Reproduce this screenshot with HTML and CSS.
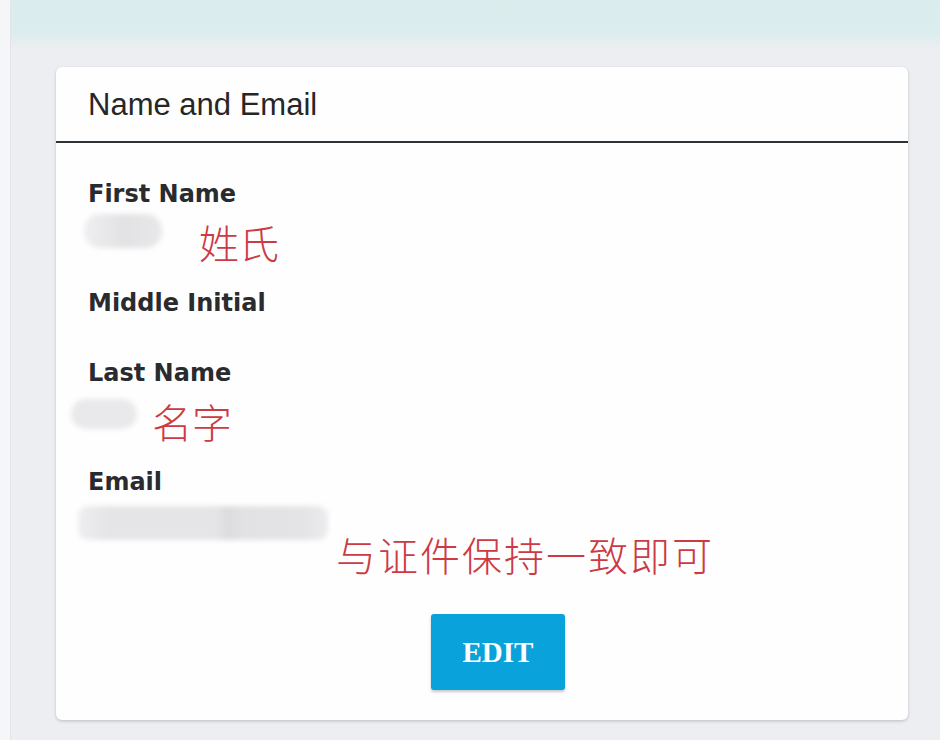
FILE: index.html
```html
<!DOCTYPE html>
<html lang="en">
<head>
<meta charset="utf-8">
<title>Name and Email</title>
<link rel="stylesheet" href="styles.css">
</head>
<body>
<div class="page">
  <aside class="rail"></aside>
  <div class="main">
    <div class="topband"></div>
    <section class="card">
      <header class="card-head">
        <h2 class="card-title">Name and Email</h2>
      </header>
      <div class="card-body">
        <div class="field">
          <div class="label">First Name</div>
          <div class="value">
            <span class="blob blob-first"></span>
            <span class="note note-first">姓氏</span>
          </div>
        </div>
        <div class="field">
          <div class="label">Middle Initial</div>
        </div>
        <div class="field">
          <div class="label">Last Name</div>
          <div class="value">
            <span class="blob blob-last"></span>
            <span class="note note-last">名字</span>
          </div>
        </div>
        <div class="field">
          <div class="label">Email</div>
          <div class="value">
            <span class="blob blob-email"></span>
            <span class="note note-email">与证件保持一致即可</span>
          </div>
        </div>
        <div class="actions">
          <button class="btn-edit" type="button">EDIT</button>
        </div>
      </div>
    </section>
  </div>
</div>
</body>
</html>
```

FILE: styles.css
```css
html, body {
  margin: 0;
  padding: 0;
}

body {
  background: #eceef1;
  font-family: "Liberation Sans", Arial, sans-serif;
  color: #222;
  width: 940px;
  height: 740px;
  overflow: hidden;
}

.page {
  display: flex;
  height: 740px;
}

.rail {
  width: 10px;
  flex: none;
  background: #f5f6f8;
  border-right: 1px solid #e2e4e7;
}

.main {
  flex: 1;
  display: flex;
  flex-direction: column;
}

.topband {
  height: 48px;
  flex: none;
  background: linear-gradient(180deg, #dbeced 0%, #dcedef 70%, #eceef1 100%);
}

.card {
  margin: 19px 0 0 45px;
  width: 852px;
  height: 653px;
  background: #fefefe;
  border-radius: 6px;
  box-shadow: 0 1px 3px rgba(0, 0, 0, 0.14), 0 2px 4px rgba(0, 0, 0, 0.06);
  display: flex;
  flex-direction: column;
}

.card-head {
  height: 74px;
  flex: none;
  display: flex;
  align-items: center;
  padding: 0 32px;
  border-bottom: 2px solid #2d3336;
}

.card-title {
  margin: 0;
  font-family: "Liberation Sans", Arial, sans-serif;
  font-weight: 400;
  font-size: 31px;
  color: #262626;
  padding-top: 2px;
}

.card-body {
  display: flex;
  flex-direction: column;
  gap: 38px;
  padding: 35px 32px 0 32px;
}

.field {
  display: flex;
  flex-direction: column;
}

.label {
  font-family: "DejaVu Sans", Verdana, sans-serif;
  font-weight: 700;
  font-size: 24px;
  line-height: 32px;
  color: #2a2b2f;
}

.value {
  height: 39px;
  display: flex;
  align-items: flex-start;
}

.blob {
  display: block;
  flex: none;
  border-radius: 16px;
  filter: blur(2.5px);
}

.blob-first {
  width: 78px;
  height: 34px;
  margin: 4px 0 0 -4px;
  background: linear-gradient(90deg, #eeeef0 0%, #e8e8ea 30%, #e2e2e4 50%, #e8e8ea 100%);
}

.blob-last {
  width: 66px;
  height: 30px;
  margin: 10px 0 0 -17px;
  background: #e9e9eb;
}

.blob-email {
  width: 250px;
  height: 34px;
  margin: 8px 0 0 -10px;
  border-radius: 10px;
  background: linear-gradient(90deg, #eeeef0 0%, #e5e5e7 12%, #e5e5e7 55%, #dcdcde 60%, #e2e2e4 66%, #e4e4e6 90%, #ececee 100%);
}

.note {
  font-family: "Noto Sans CJK SC", "Noto Sans CJK JP", sans-serif;
  font-weight: 300;
  font-size: 40px;
  line-height: 44px;
  color: #cc3a44;
  white-space: nowrap;
}

.note-first {
  margin: 10px 0 0 37px;
}

.note-last {
  margin: 10px 0 0 15px;
}

.note-email {
  margin: 34px 0 0 8px;
  letter-spacing: 2px;
}

.actions {
  display: flex;
  justify-content: center;
  padding-left: 32px;
  margin-top: 39px;
}

.btn-edit {
  width: 134px;
  height: 76px;
  border: none;
  border-radius: 3px;
  background: #0aa2da;
  color: #ffffff;
  font-family: "Liberation Serif", "Times New Roman", serif;
  font-weight: 700;
  font-size: 29px;
  box-shadow: 0 2px 3px rgba(0, 0, 0, 0.22);
  cursor: pointer;
  padding: 0;
}
```
